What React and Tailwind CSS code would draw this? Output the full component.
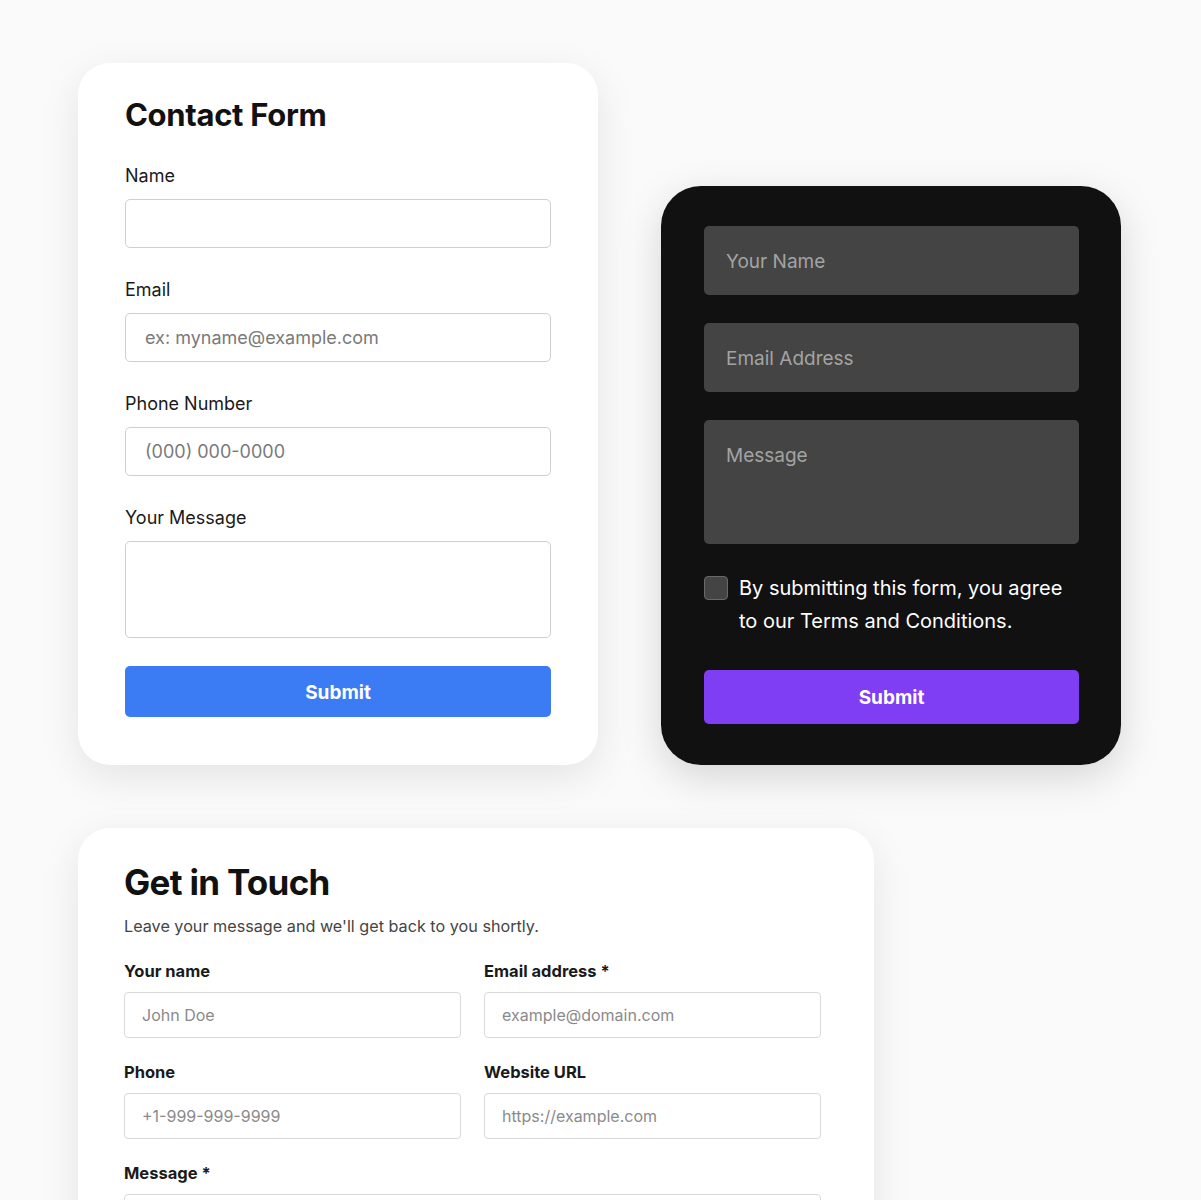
export default function App() {
  const font = { fontFamily: 'Inter, "Noto Sans", sans-serif' };
  return (
    <div className="min-h-[1200px] bg-[#fafafa] pl-[78px] pt-[63px] overflow-hidden" style={font}>
      <div className="flex items-end gap-[63px]">
        {/* Card 1 */}
        <div className="w-[520px] rounded-[32px] bg-white shadow-[0_12px_40px_rgba(0,0,0,0.09)] px-[47px] pt-[32px] pb-[48px]">
          <h1 className="text-[31px] font-bold leading-[40px] text-[#111] tracking-[-0.01em]">Contact Form</h1>
          <div className="mt-[28px] flex flex-col gap-[29px]">
            <div>
              <label className="block text-[18px] leading-[26px] text-[#1a1a1a]">Name</label>
              <input className="mt-[10px] block w-full h-[49px] rounded-[5px] border border-[#cfcfcf] bg-white px-[20px] text-[18px] outline-none" />
            </div>
            <div>
              <label className="block text-[18px] leading-[26px] text-[#1a1a1a]">Email</label>
              <input placeholder="ex: myname@example.com" className="mt-[10px] block w-full h-[49px] rounded-[5px] border border-[#cfcfcf] bg-white px-[19px] text-[18px] outline-none placeholder:text-[#7a7a7a]" />
            </div>
            <div>
              <label className="block text-[18px] leading-[26px] text-[#1a1a1a]">Phone Number</label>
              <input placeholder="(000) 000-0000" className="mt-[10px] block w-full h-[49px] rounded-[5px] border border-[#cfcfcf] bg-white px-[19px] text-[18px] outline-none placeholder:text-[#7a7a7a]" />
            </div>
            <div>
              <label className="block text-[18px] leading-[26px] text-[#1a1a1a]">Your Message</label>
              <textarea className="mt-[10px] block w-full h-[97px] resize-none rounded-[5px] border border-[#cfcfcf] bg-white px-[19px] py-[12px] text-[18px] outline-none" />
            </div>
          </div>
          <button className="mt-[28px] block w-full h-[51px] rounded-[5px] bg-[#3b7bf4] pt-[3px] text-white text-[19px] font-bold">Submit</button>
        </div>

        {/* Card 2 */}
        <div className="w-[460px] rounded-[40px] bg-[#111111] shadow-[0_12px_40px_rgba(0,0,0,0.15)] pl-[43px] pr-[42px] pt-[40px] pb-[41px]">
          <div className="flex flex-col gap-[28px]">
            <input placeholder="Your Name" className="block w-full h-[69px] rounded-[5px] bg-[#444444] px-[22px] pt-[2px] text-[19px] text-white outline-none placeholder:text-[#a3a3a3]" />
            <input placeholder="Email Address" className="block w-full h-[69px] rounded-[5px] bg-[#444444] px-[22px] pt-[2px] text-[19px] text-white outline-none placeholder:text-[#a3a3a3]" />
            <textarea placeholder="Message" className="block w-full h-[124px] resize-none rounded-[5px] bg-[#444444] px-[22px] pt-[23px] text-[19px] leading-[26px] text-white outline-none placeholder:text-[#a3a3a3]" />
          </div>
          <div className="mt-[28px] flex items-start gap-[11px]">
            <div className="mt-[4px] w-[24px] h-[24px] shrink-0 rounded-[4px] bg-[#444444] border border-[#6a6a6a]" />
            <p className="text-[20px] leading-[33px] text-white">By submitting this form, you agree to our Terms and Conditions.</p>
          </div>
          <button className="mt-[32px] block w-full h-[54px] rounded-[5px] bg-[#7f3df4] pt-[2px] text-white text-[19px] font-bold">Submit</button>
        </div>
      </div>

      {/* Card 3 */}
      <div className="mt-[63px] w-[796px] h-[500px] rounded-[32px] bg-white shadow-[0_12px_40px_rgba(0,0,0,0.09)] pl-[46px] pr-[53px] pt-[32px]">
        <h2 className="text-[35px] font-bold leading-[44px] text-[#111] tracking-[-0.02em]">Get in Touch</h2>
        <p className="mt-[10px] text-[16.2px] leading-[24px] text-[#444]">Leave your message and we'll get back to you shortly.</p>
        <div className="mt-[23px] grid grid-cols-2 gap-x-[23px] gap-y-[24px]">
          <div>
            <label className="block text-[16.5px] font-bold leading-[20px] text-[#1a1a1a]">Your name</label>
            <input placeholder="John Doe" className="mt-[11px] block w-full h-[46px] rounded-[4px] border border-[#d9d9d9] bg-white px-[17px] text-[16px] outline-none placeholder:text-[#8a8a8a]" />
          </div>
          <div>
            <label className="block text-[16.5px] font-bold leading-[20px] text-[#1a1a1a]">Email address *</label>
            <input placeholder="example@domain.com" className="mt-[11px] block w-full h-[46px] rounded-[4px] border border-[#d9d9d9] bg-white px-[17px] text-[16px] outline-none placeholder:text-[#8a8a8a]" />
          </div>
          <div>
            <label className="block text-[16.5px] font-bold leading-[20px] text-[#1a1a1a]">Phone</label>
            <input placeholder="+1-999-999-9999" className="mt-[11px] block w-full h-[46px] rounded-[4px] border border-[#d9d9d9] bg-white px-[17px] text-[16px] outline-none placeholder:text-[#8a8a8a]" />
          </div>
          <div>
            <label className="block text-[16.5px] font-bold leading-[20px] text-[#1a1a1a]">Website URL</label>
            <input placeholder="https://example.com" className="mt-[11px] block w-full h-[46px] rounded-[4px] border border-[#d9d9d9] bg-white px-[17px] text-[16px] outline-none placeholder:text-[#8a8a8a]" />
          </div>
          <div className="col-span-2">
            <label className="block text-[16.5px] font-bold leading-[20px] text-[#1a1a1a]">Message *</label>
            <textarea className="mt-[11px] block w-full h-[120px] resize-none rounded-[4px] border border-[#d9d9d9] bg-white px-[17px] text-[16px] outline-none" />
          </div>
        </div>
      </div>
    </div>
  );
}
